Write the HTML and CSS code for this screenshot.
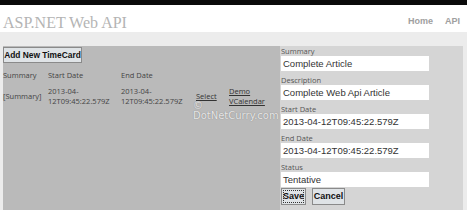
FILE: index.html
```html
<!DOCTYPE html>
<html>
<head>
<meta charset="utf-8">
<link rel="stylesheet" href="styles.css">
</head>
<body>
<div class="topbar"></div>
<header class="header">
  <div class="title">ASP.NET Web API</div>
  <nav class="nav"><a class="nav-link">Home</a><a class="nav-link">API</a></nav>
</header>
<main class="main">
  <section class="list-panel">
    <button class="btn btn-add">Add New TimeCard</button>
    <div class="grid">
      <div class="cell head">Summary</div>
      <div class="cell head">Start Date</div>
      <div class="cell head">End Date</div>
      <div class="cell head"></div>
      <div class="cell head"></div>
      <div class="cell data">[Summary]</div>
      <div class="cell data">2013-04-<br>12T09:45:22.579Z</div>
      <div class="cell data">2013-04-<br>12T09:45:22.579Z</div>
      <div class="cell data"><a class="link">Select</a></div>
      <div class="cell data"><a class="link">Demo<br>VCalendar</a></div>
    </div>
    <div class="watermark">© DotNetCurry.com</div>
  </section>
  <section class="form-panel">
    <div class="field first"><label class="label">Summary</label><div class="input">Complete Article</div></div>
    <div class="field"><label class="label">Description</label><div class="input">Complete Web Api Article</div></div>
    <div class="field"><label class="label">Start Date</label><div class="input">2013-04-12T09:45:22.579Z</div></div>
    <div class="field"><label class="label">End Date</label><div class="input">2013-04-12T09:45:22.579Z</div></div>
    <div class="field"><label class="label">Status</label><div class="input">Tentative</div></div>
    <div class="actions">
      <button class="btn btn-save">Save</button>
      <button class="btn btn-cancel">Cancel</button>
    </div>
  </section>
</main>
</body>
</html>
```

FILE: styles.css
```css
html, body {
  margin: 0;
  padding: 0;
  height: 100%;
}
body {
  background: #efefef;
  font-family: "Open Sans", "DejaVu Sans", sans-serif;
  overflow: hidden;
}
.topbar {
  height: 5px;
  background: #0a0a0a;
}
.header {
  height: 27px;
  background: #ffffff;
  display: flex;
  align-items: flex-start;
  justify-content: space-between;
}
.title {
  font-family: "Liberation Serif", serif;
  font-size: 16px;
  color: #b4b4b4;
  line-height: 20px;
  padding: 8px 0 0 3px;
}
.nav {
  display: flex;
  gap: 12px;
  padding: 11px 7px 0 0;
}
.nav-link {
  font-family: "Liberation Sans", sans-serif;
  font-weight: bold;
  font-size: 9px;
  color: #a0a0a0;
}
.main {
  display: flex;
  padding: 14px 4px 0 3px;
  background: #ececec;
  height: calc(100% - 32px);
  box-sizing: border-box;
}
.list-panel {
  position: relative;
  width: 277px;
  background: #bababa;
  padding-top: 1px;
  flex-shrink: 0;
}
.btn {
  font-family: "Liberation Sans", sans-serif;
  font-weight: bold;
  font-size: 9px;
  color: #111;
  background: #dfe3e6;
  border: 1px solid #8a8a8a;
  padding: 0;
  margin: 0;
  height: 17px;
  line-height: 15px;
  white-space: nowrap;
}
.btn-add {
  display: block;
  width: 79px;
  height: 16px;
  line-height: 14px;
  font-size: 8.4px;
}
.grid {
  display: grid;
  grid-template-columns: 45px 73px 75px 33px 1fr;
  margin-top: 6px;
  font-size: 7.5px;
  color: #444;
}
.cell.head {
  line-height: 12px;
  height: 12px;
}
.cell.data {
  line-height: 10px;
  padding-top: 5px;
  display: flex;
  align-items: center;
}
.link {
  text-decoration: underline;
  color: #333;
}
.watermark {
  position: absolute;
  left: 190px;
  top: 55px;
  line-height: 10px;
  font-family: "DejaVu Sans", sans-serif;
  font-size: 10px;
  color: rgba(255, 255, 255, 0.8);
  text-shadow: 0 0 1px rgba(90, 90, 90, 0.7);
}
.form-panel {
  flex: 1;
  background: #d5d5d5;
  padding-left: 1px;
}
.field {
  display: flex;
  flex-direction: column;
}
.label {
  font-size: 7.5px;
  color: #555;
  line-height: 10px;
  padding-top: 4px;
}
.field.first .label {
  padding-top: 0;
}
.input {
  width: 146px;
  height: 15px;
  line-height: 15px;
  background: #ffffff;
  font-family: "Liberation Sans", sans-serif;
  font-size: 9.5px;
  color: #333;
  padding-left: 2px;
}
.actions {
  display: flex;
  gap: 6px;
  margin-top: 1px;
}
.btn-save {
  width: 25px;
  outline: 1px dotted #333;
  outline-offset: -3px;
}
.btn-cancel {
  width: 33px;
}
```
